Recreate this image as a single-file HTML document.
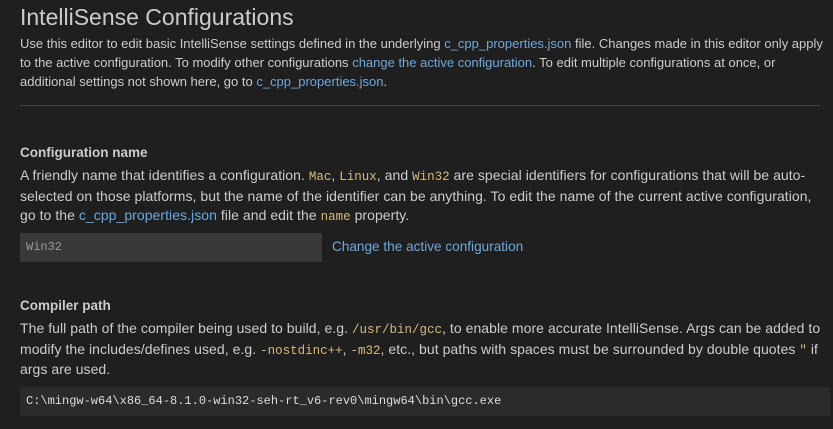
<!DOCTYPE html>
<html><head><meta charset="utf-8"><style>
body{margin:0;width:833px;height:429px;background:#1f1f1f;color:#cccccc;font-family:"Liberation Sans",sans-serif;font-size:13px;overflow:hidden;position:relative}
.a{position:absolute;left:20px;white-space:nowrap;letter-spacing:0}
.d{font-size:14px;letter-spacing:0.05px}
.l{color:#6fa8dc}
.c{color:#d7ba7d;font-family:"Liberation Mono",monospace;font-size:12.5px;letter-spacing:0}
h1{position:absolute;left:20px;top:4px;margin:0;font-size:23px;font-weight:normal;color:#cccccc;letter-spacing:0}
.b{font-weight:bold;color:#cccccc;font-size:13.5px}
.hr{position:absolute;left:20px;top:105px;width:800px;height:1px;background:#454545}
.in{position:absolute;font-family:"Liberation Mono",monospace;font-size:12px;box-sizing:border-box;padding-left:6px;line-height:29px}
</style></head><body>
<h1>IntelliSense Configurations</h1>
<div class="a" style="top:36px">Use this editor to edit basic IntelliSense settings defined in the underlying <span class="l">c_cpp_properties.json</span> file. Changes made in this editor only apply</div>
<div class="a" style="top:55px">to the active configuration. To modify other configurations <span class="l">change the active configuration</span>. To edit multiple configurations at once, or</div>
<div class="a" style="top:74px">additional settings not shown here, go to <span class="l">c_cpp_properties.json</span>.</div>
<div class="hr"></div>
<div class="a b" style="top:145px">Configuration name</div>
<div class="a d" style="top:167px">A friendly name that identifies a configuration. <span class="c">Mac</span>, <span class="c">Linux</span>, and <span class="c">Win32</span> are special identifiers for configurations that will be auto-</div>
<div class="a d" style="top:188px">selected on those platforms, but the name of the identifier can be anything. To edit the name of the current active configuration,</div>
<div class="a d" style="top:207px">go to the <span class="l">c_cpp_properties.json</span> file and edit the <span class="c">name</span> property.</div>
<div class="in" style="left:20px;top:233px;width:302px;height:29px;background:#393939;color:#9a9a9a">Win32</div>
<div class="a l" style="left:332px;top:239px;font-size:13.6px">Change the active configuration</div>
<div class="a b" style="top:298px">Compiler path</div>
<div class="a d" style="top:320px">The full path of the compiler being used to build, e.g. <span class="c">/usr/bin/gcc</span>, to enable more accurate IntelliSense. Args can be added to</div>
<div class="a d" style="top:341px">modify the includes/defines used, e.g. <span class="c">-nostdinc++</span>, <span class="c">-m32</span>, etc., but paths with spaces must be surrounded by double quotes <span class="c">"</span> if</div>
<div class="a d" style="top:361px">args are used.</div>
<div class="in" style="left:20px;top:387px;width:810px;height:29px;background:#2b2b2b;color:#dddddd">C:\mingw-w64\x86_64-8.1.0-win32-seh-rt_v6-rev0\mingw64\bin\gcc.exe</div>
</body></html>
